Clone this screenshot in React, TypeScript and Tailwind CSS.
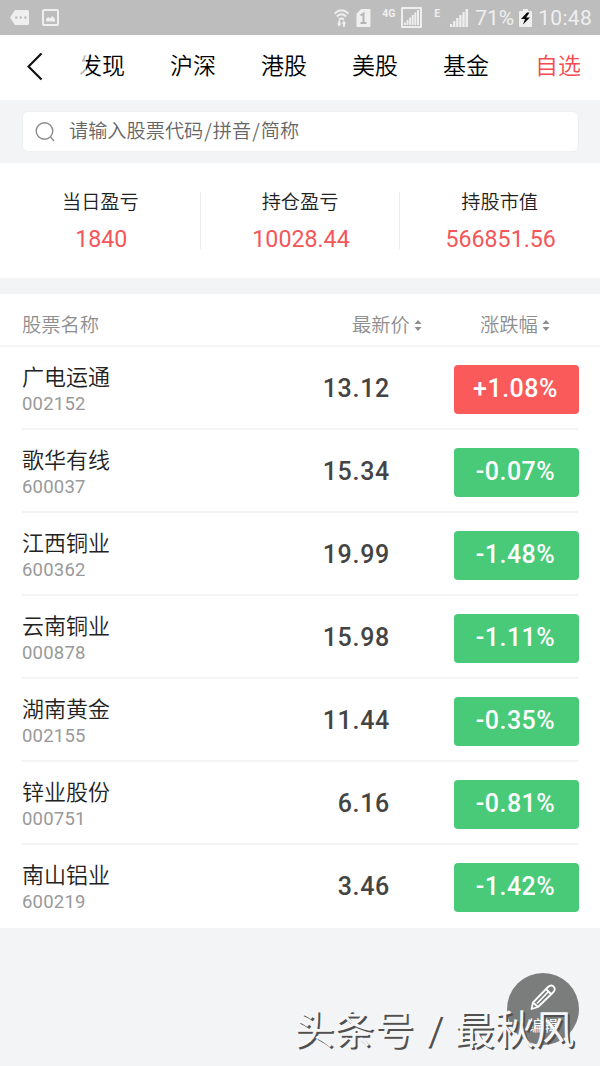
type Stock = {
  name: string;
  code: string;
  price: string;
  change: string;
};

const TABS = ["发现", "沪深", "港股", "美股", "基金"];

const SUMMARY = [
  { label: "当日盈亏", value: "1840" },
  { label: "持仓盈亏", value: "10028.44" },
  { label: "持股市值", value: "566851.56" },
];

const STOCKS: Stock[] = [
  { name: "广电运通", code: "002152", price: "13.12", change: "+1.08%" },
  { name: "歌华有线", code: "600037", price: "15.34", change: "-0.07%" },
  { name: "江西铜业", code: "600362", price: "19.99", change: "-1.48%" },
  { name: "云南铜业", code: "000878", price: "15.98", change: "-1.11%" },
  { name: "湖南黄金", code: "002155", price: "11.44", change: "-0.35%" },
  { name: "锌业股份", code: "000751", price: "6.16", change: "-0.81%" },
  { name: "南山铝业", code: "600219", price: "3.46", change: "-1.42%" },
];

function SignalBars({ size }: { size: number }) {
  return (
    <svg width={size} height={size} viewBox="0 0 18 18" fill="currentColor">
      <path d="M0 15h2.300v3H0zM3.100 12h2.300v6H3.100zM6.200 9h2.300v9H6.200zM9.300 6h2.300v12H9.300zM12.400 3h2.300v15h-2.300zM15.500 0H18v18h-2.500z" />
    </svg>
  );
}

function StatusBar() {
  return (
    <div className="flex h-[35px] items-center bg-[#bdbdbd] pl-[10px] pr-[8px] text-[#efefef]">
      <svg width="19" height="15" viewBox="0 0 19 15" fill="currentColor">
        <path d="M5 0h12.500q1.500 0 1.500 1.500v12q0 1.500-1.500 1.500H5L0 7.500z" />
        <g fill="#bdbdbd">
          <circle cx="6.300" cy="7.500" r="1.200" />
          <circle cx="10.800" cy="7.500" r="1.200" />
          <circle cx="15.300" cy="7.500" r="1.200" />
        </g>
      </svg>
      <svg className="ml-[13px]" width="17" height="17" viewBox="0 0 17 17">
        <rect x="1" y="1" width="15" height="15" rx="1" fill="none" stroke="currentColor" strokeWidth="2" />
        <path d="M4 12.500V10l2.500-2 1.500 1.500L10.500 7l2.500 3v2.500z" fill="currentColor" />
      </svg>

      <div className="flex-1" />

      {/* wifi with transfer arrows */}
      <svg width="15" height="18" viewBox="0 0 15 18">
        <g fill="none" stroke="currentColor" strokeWidth="1.900">
          <path d="M.5 4.500q7-6.500 14 0" />
          <path d="M2.800 7.500q4.700-4.300 9.400 0" />
          <path d="M5 10.500q2.500-2.200 5 0" />
        </g>
        <path d="M6.300 11.500v3H7.300L5.100 17.800 2.900 14.500h1.300v-3zM11 17.800v-3h1.200l-2.300-3.300-2.200 3.300H9v3z" fill="currentColor" />
      </svg>
      <svg className="ml-[7px]" width="15" height="18" viewBox="0 0 15 18">
        <path d="M5 0h8.500q1 0 1 1v16q0 1-1 1h-12q-1 0-1-1V5z" fill="currentColor" />
        <path d="M4.500 6.500 7.500 4.500v9.500M4.500 14h6" fill="none" stroke="#b5b5b5" strokeWidth="2" />
      </svg>
      <span className="mb-[7px] ml-[11px] w-[15px] text-[10.500px] leading-none font-bold">4G</span>
      <div className="ml-[4px] flex h-[21px] w-[21px] items-center justify-center rounded-[1px] border-2 border-[#efefef]">
        <SignalBars size={15} />
      </div>
      <span className="mb-[7px] ml-[12px] w-[6px] text-[10.500px] leading-none font-bold">E</span>
      <div className="ml-[10px]">
        <SignalBars size={18} />
      </div>
      <span className="mt-[2px] ml-[7px] w-[41px] text-[21px] leading-none">71%</span>
      <svg className="ml-[3px]" width="13" height="18" viewBox="0 0 13 18">
        <path d="M4 0h5v2h3q1 0 1 1v14q0 1-1 1H1q-1 0-1-1V3q0-1 1-1h3z" fill="currentColor" />
        <path d="M8 3.500 2 10h4l-2 5.500L11 8.500H7.200L10.500 3.500z" fill="#0b0b0b" />
      </svg>
      <span className="mt-[2px] ml-[6px] text-[21px] leading-none tracking-[0.300px]">10:48</span>
    </div>
  );
}

function NavBar() {
  return (
    <div className="flex h-[65px] items-center bg-white pb-px pl-[27px] pr-[19px]">
      <svg width="16" height="28" viewBox="0 0 16 28" fill="none" stroke="#111" strokeWidth="2.200">
        <path d="M14.500 .5 1.500 13.500l13 13" />
      </svg>
      <div className="relative ml-[36px] flex gap-[45px] text-[23px] leading-[34px] font-[350] text-black">
        {TABS.map((t) => (
          <span key={t} className="w-[46px] whitespace-nowrap">
            {t}
          </span>
        ))}
        <div className="absolute -left-1 top-0 h-full w-[11px] bg-white/70" />
      </div>
      <span className="ml-auto text-[23px] leading-[34px] font-[350] text-[#f4494f]">自选</span>
    </div>
  );
}

function SortIcon() {
  return (
    <svg width="8" height="11" viewBox="0 0 8 11" fill="#8e8e8e">
      <path d="M4 0 7.500 4H.5zM4 11 .5 7h7z" />
    </svg>
  );
}

function StockRow({ stock }: { stock: Stock }) {
  const up = stock.change.startsWith("+");
  return (
    <div className="mx-[22px] flex h-[83px] items-center border-b-2 border-[#f3f4f5] last:border-transparent">
      <div className="mt-[3px] w-[140px]">
        <div className="text-[22px] leading-[30px] font-[350] text-[#222]">{stock.name}</div>
        <div className="text-[18.500px] leading-[22px] tracking-[0.200px] text-[#999]">{stock.code}</div>
      </div>
      <div className="mt-[3px] w-[228px] text-right text-[25px] font-medium tracking-[0.700px] text-[#444]">
        {stock.price}
      </div>
      <div
        className={`-mr-px ml-auto mt-[4px] flex h-[49px] w-[125px] items-center justify-center rounded pr-[2px] pb-px text-[25px] font-medium tracking-[0.500px] text-white ${
          up ? "bg-[#fa5a5a]" : "bg-[#48ca78]"
        }`}
      >
        {stock.change}
      </div>
    </div>
  );
}

export default function App() {
  return (
    <div className="relative h-[1066px] w-[600px] overflow-hidden bg-[#f3f4f6] font-[Roboto,'Noto_Sans_CJK_SC',sans-serif]">
      <StatusBar />
      <NavBar />

      <div className="h-[63px] px-[22px] pt-[11px]">
        <div className="-mr-px flex h-[41px] items-center rounded-md border border-[#eeeff0] bg-white pl-[12px]">
          <svg width="20" height="20" viewBox="0 0 20 20" fill="none" stroke="#8a8a8a" strokeWidth="1.400">
            <circle cx="9.500" cy="9" r="8.300" />
            <path d="m15.500 15 3.500 4" />
          </svg>
          <span className="ml-[14px] pb-[3px] font-['Noto_Sans_CJK_SC',sans-serif] text-[19.200px] leading-[28px] font-[350] text-[#666]">
            请输入股票代码<span className="mx-px">/</span>拼音<span className="mx-px">/</span>简称
          </span>
        </div>
      </div>

      <div className="flex h-[115px] bg-white py-[29px] pl-px">
        {SUMMARY.map((s) => (
          <div
            key={s.label}
            className="flex flex-1 flex-col items-center border-r border-[#ececec] last:border-transparent"
          >
            <div className="-mt-[3px] text-[19.200px] leading-[28px] font-[350] text-[#222]">{s.label}</div>
            <div className="mt-[8px] ml-[2px] text-[23.200px] leading-[28px] text-[#f4565a]">{s.value}</div>
          </div>
        ))}
      </div>

      <div className="mt-4 bg-white">
        <div className="flex h-[53px] items-center border-b-2 border-[#f3f4f5] pt-[12px] pl-[22px] text-[19.300px] leading-[28px] font-[350] text-[#8e8e8e]">
          <span className="w-[330px]">股票名称</span>
          <div className="flex w-[128px] items-center gap-[4px]">
            最新价
            <SortIcon />
          </div>
          <div className="flex items-center gap-[4px]">
            涨跌幅
            <SortIcon />
          </div>
        </div>
        <div className="h-[581px]">
          {STOCKS.map((s) => (
            <StockRow key={s.code} stock={s} />
          ))}
        </div>
      </div>

      {/* floating edit button */}
      <button
        type="button"
        className="absolute left-[507px] top-[973px] flex h-[72px] w-[72px] flex-col items-center rounded-full bg-[#7b7d7d] pt-[11px] text-white"
      >
        <svg width="26" height="27" viewBox="0 0 26 27" fill="none" stroke="currentColor" strokeWidth="1.800" strokeLinejoin="round">
          <path d="M1.500 25 3 18.500 18 3q3-2.800 5.500-.5t0 5.500L8 23z" />
          <path d="m3 18.500 5 4.500M16 5l5 5M7 19.500 18 8" />
        </svg>
        <span className="mt-[5px] text-[15px] leading-[20px]">编辑</span>
      </button>

      {/* watermark */}
      <div className="absolute left-[294px] top-[1003px] whitespace-nowrap text-[40px] leading-[56px] font-normal text-[#f6f6f7] [text-shadow:2px_2px_0_#505050] [word-spacing:2px]">
        头条号 / 最秋风
      </div>
    </div>
  );
}
